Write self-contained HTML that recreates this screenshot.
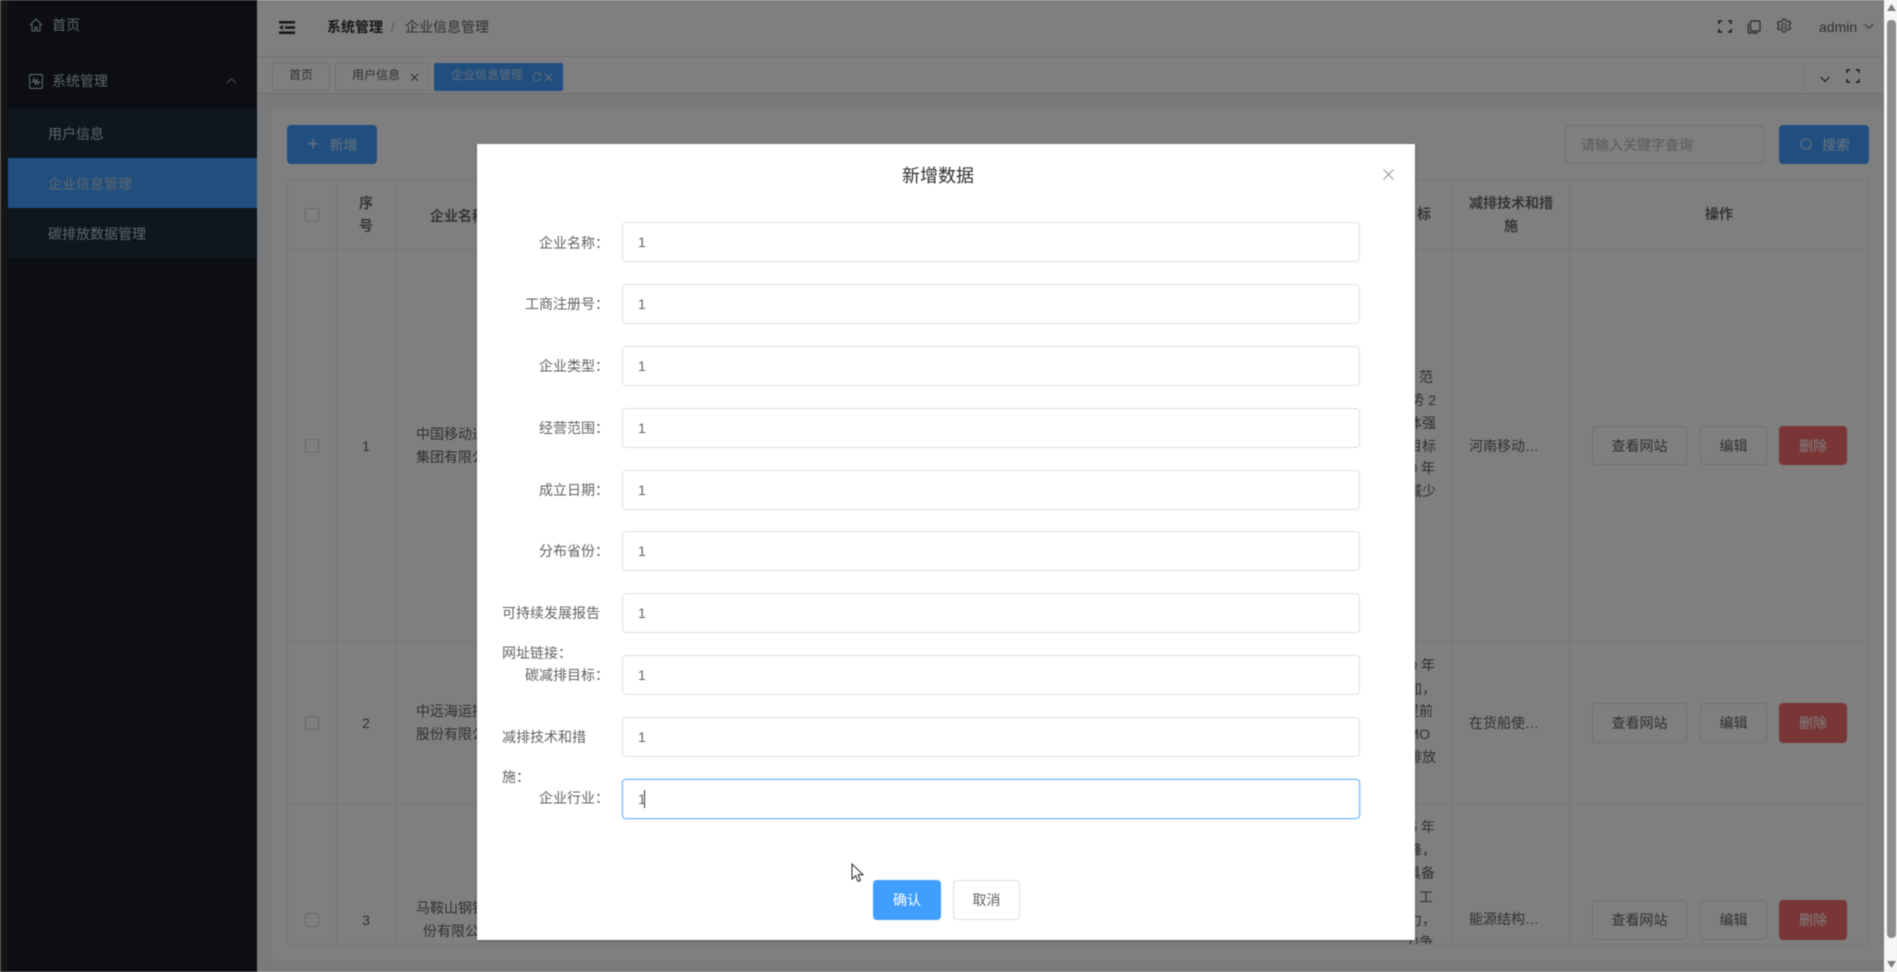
<!DOCTYPE html>
<html lang="zh"><head><meta charset="utf-8"><title>企业信息管理</title>
<style>
*{box-sizing:border-box}
html,body{margin:0;padding:0;width:1897px;height:972px;overflow:hidden;background:#f3f4f6;font-family:"Liberation Sans","Noto Sans CJK SC",sans-serif;font-size:14px;color:#606266}
#w{position:absolute;left:0;top:0;width:1897px;height:972px;overflow:hidden;background:#f3f4f6;filter:blur(.4px)}
.a{position:absolute}
.t{position:absolute;line-height:20px;height:20px;white-space:nowrap}
.c{transform:translateX(-50%)}
.r{transform:translateX(-100%)}
.b{position:absolute;border:1px solid #dcdfe6;border-radius:4px;background:#fff;display:flex;align-items:center;justify-content:center;color:#606266;white-space:nowrap}
.red{background:#f56c6c;border-color:#f56c6c;color:#fff}
.blue{background:#409eff;border-color:#409eff;color:#fff}
.l{position:absolute;background:#ebeef5}
.th{font-weight:700;color:#6a6c70}
.cb{position:absolute;width:14px;height:14px;border:1px solid #c8cbd2;border-radius:2px;background:#fff}
.in{position:absolute;left:622px;width:738px;height:40px;border:1px solid #dfe1e6;border-radius:4px;background:#fff;padding-left:15px;line-height:38px;color:#606266}
.lb{position:absolute;width:200px;left:409px;text-align:right;line-height:20px;height:20px;color:#606266;white-space:nowrap}
.ll{position:absolute;left:502px;line-height:20px;height:20px;color:#606266;white-space:nowrap}
svg{position:absolute;overflow:visible}
</style></head><body><div id="w">

<!-- sidebar -->
<div class="a" style="left:0;top:0;width:8px;height:972px;background:#2a2a2a"></div>
<div class="a" style="left:0;top:0;width:2px;height:972px;background:#4a4038"></div>
<div class="a" style="left:8px;top:0;width:249px;height:972px;background:#181c27"></div>
<div class="a" style="left:8px;top:108px;width:249px;height:150px;background:#1f2d3d"></div>
<div class="a" style="left:8px;top:158px;width:249px;height:50px;background:#409eff"></div>
<svg style="left:29px;top:18px" width="14" height="14" viewBox="0 0 14 14" fill="none" stroke="#bfcbd9" stroke-width="1.1"><path d="M1 7.2 7 1l6 6.200M3 6v7h3V9h2v4h3V6"/></svg>
<div class="t" style="left:52px;top:15px;color:#bfcbd9">首页</div>
<svg style="left:29px;top:74px" width="14" height="15" viewBox="0 0 14 15" fill="none" stroke="#bfcbd9" stroke-width="1.1"><rect x=".6" y=".6" width="12.8" height="13.8" rx="1"/><path d="M2 8h2l1-4 1.500 7L8 5l1 5 1-2h2"/></svg>
<div class="t" style="left:52px;top:71px;color:#bfcbd9">系统管理</div>
<svg style="left:226px;top:77px" width="11" height="7" viewBox="0 0 11 7" fill="none" stroke="#8f99a6" stroke-width="1.1"><path d="M1 6l4.500-4.500L10 6"/></svg>
<div class="t" style="left:48px;top:124px;color:#bfcbd9">用户信息</div>
<div class="t" style="left:48px;top:174px;color:#bfcbd9">企业信息管理</div>
<div class="t" style="left:48px;top:224px;color:#bfcbd9">碳排放数据管理</div>

<!-- header -->
<div class="a" style="left:257px;top:0;width:1627px;height:57px;background:#fff;border-bottom:1px solid #e4e6ea"></div>
<svg style="left:279px;top:21px" width="16" height="13" viewBox="0 0 16 13" fill="#303133"><rect width="16" height="2.6"/><rect x="6" y="5.2" width="10" height="2.6"/><rect y="10.400" width="16" height="2.6"/><path d="M0 6.500l4-2.600v5.200z"/></svg>
<div class="t" style="left:327px;top:17px;font-weight:700;color:#303133">系统管理</div>
<div class="t" style="left:391px;top:17px;color:#b0b3b8">/</div>
<div class="t" style="left:405px;top:17px;color:#606266">企业信息管理</div>
<svg style="left:1718px;top:20px" width="14" height="13" viewBox="0 0 14 13" fill="none" stroke="#303133" stroke-width="1.5"><path d="M1 4V1h3M10 1h3v3M13 9v3h-3M4 12H1V9"/></svg>
<svg style="left:1747px;top:20px" width="14" height="14" viewBox="0 0 14 14" fill="none" stroke="#505258" stroke-width="1.2"><rect x="3.500" y="1" width="9.500" height="10" rx="1"/><path d="M1.200 3.500V12a1 1 0 0 0 1 1H11"/></svg>
<svg style="left:1776px;top:18px" width="16" height="16" viewBox="0 0 16 16" fill="none" stroke="#505258" stroke-width="1.1"><path d="M6.600 1h2.800l.4 2 1.500.8 1.900-.8 1.400 2.400-1.500 1.300v1.600l1.500 1.300-1.400 2.400-1.900-.8-1.500.8-.4 2H6.600l-.4-2-1.500-.8-1.900.8L1.400 10l1.500-1.300V7.100L1.400 5.800l1.400-2.400 1.900.8 1.500-.8z"/><circle cx="8" cy="7.900" r="2.200"/></svg>
<div class="t" style="left:1819px;top:17px;color:#606266">admin</div>
<svg style="left:1864px;top:23px" width="10" height="7" viewBox="0 0 10 7" fill="none" stroke="#606266" stroke-width="1"><path d="M.7 1l4.300 4.300L9.300 1"/></svg>

<!-- tags -->
<div class="a" style="left:257px;top:57px;width:1627px;height:37px;background:#fff;border-bottom:1px solid #dcdee2"></div>
<div class="a" style="left:272px;top:63px;width:58px;height:28px;border:1px solid #dcdfe6;border-radius:2px;background:#fff"></div>
<div class="t" style="left:289px;top:65px;font-size:12px">首页</div>
<div class="a" style="left:335px;top:63px;width:94px;height:28px;border:1px solid #dcdfe6;border-radius:2px;background:#fff"></div>
<div class="t" style="left:352px;top:65px;font-size:12px">用户信息</div>
<svg style="left:410px;top:73px" width="9" height="9" viewBox="0 0 9 9" fill="none" stroke="#606266" stroke-width="1"><path d="M1 1l7 7M8 1L1 8"/></svg>
<div class="a" style="left:434px;top:63px;width:129px;height:28px;border-radius:2px;background:#409eff"></div>
<div class="t" style="left:451px;top:65px;font-size:12px;color:#c6d8ea">企业信息管理</div>
<svg style="left:532px;top:72px" width="10" height="10" viewBox="0 0 10 10" fill="none" stroke="#b8d4ee" stroke-width="1"><path d="M8.600 3A4 4 0 1 0 9 6M9 .8V3.200H6.600"/></svg>
<svg style="left:544px;top:73px" width="9" height="9" viewBox="0 0 9 9" fill="none" stroke="#d6e6f5" stroke-width="1"><path d="M1 1l7 7M8 1L1 8"/></svg>
<div class="a" style="left:1804px;top:66px;width:1px;height:25px;background:#e4e6ea"></div>
<svg style="left:1820px;top:76px" width="10" height="7" viewBox="0 0 10 7" fill="none" stroke="#303133" stroke-width="1.1"><path d="M.7 1l4.300 4.500L9.300 1"/></svg>
<svg style="left:1846px;top:69px" width="14" height="14" viewBox="0 0 14 14" fill="none" stroke="#303133" stroke-width="1.4"><path d="M1 4V1h3M10 1h3v3M13 10v3h-3M4 13H1v-3"/></svg>

<!-- main panel -->
<div class="a" style="left:272px;top:110px;width:1612px;height:850px;background:#fff"></div>
<div class="b blue" style="left:287px;top:125px;width:90px;height:39px"><span style="font-size:19px;font-weight:300;margin-right:10px;line-height:18px;color:#cfe4f8">+</span><span style="color:#d3e6f8;position:relative;left:1px">新增</span></div>
<div class="a" style="left:1565px;top:125px;width:199px;height:39px;border:1px solid #dcdfe6;border-radius:4px;background:#fff;padding-left:15px;line-height:38px;color:#b3b5ba;white-space:nowrap">请输入关键字查询</div>
<div class="b blue" style="left:1779px;top:125px;width:90px;height:39px"><svg style="left:20px;top:12px" width="13" height="13" viewBox="0 0 13 13" fill="none" stroke="#d3e6f8" stroke-width="1.1"><circle cx="6" cy="6" r="5"/><path d="M9.600 9.600l1.600 1.600"/></svg><span style="margin-left:24px;color:#d3e6f8">搜索</span></div>

<!-- table -->
<div class="l" style="left:287px;top:179px;width:1582px;height:1px"></div>
<div class="l" style="left:287px;top:249px;width:1582px;height:1px"></div>
<div class="l" style="left:287px;top:641px;width:1582px;height:1px"></div>
<div class="l" style="left:287px;top:803px;width:1582px;height:1px"></div>
<div class="l" style="left:287px;top:944px;width:1582px;height:1px"></div>
<div class="l" style="left:287px;top:179px;width:1px;height:765px"></div>
<div class="l" style="left:336px;top:179px;width:1px;height:765px"></div>
<div class="l" style="left:396px;top:179px;width:1px;height:765px"></div>
<div class="l" style="left:1452px;top:179px;width:1px;height:765px"></div>
<div class="l" style="left:1569px;top:179px;width:1px;height:765px"></div>
<div class="l" style="left:1868px;top:179px;width:1px;height:765px"></div>

<div class="cb" style="left:305px;top:208px"></div>
<div class="t th c" style="left:366px;top:193px">序</div>
<div class="t th c" style="left:366px;top:216px">号</div>
<div class="t th" style="left:430px;top:206px">企业名称</div>
<div class="t th" style="left:1361px;top:204px">碳减排目标</div>
<div class="t th c" style="left:1511px;top:193px">减排技术和措</div>
<div class="t th c" style="left:1511px;top:216px">施</div>
<div class="t th c" style="left:1719px;top:204px">操作</div>

<!-- row 1 -->
<div class="cb" style="left:305px;top:439px"></div>
<div class="t c" style="left:366px;top:436px">1</div>
<div class="t" style="left:416px;top:424px">中国移动通信</div>
<div class="t" style="left:416px;top:447px">集团有限公司</div>
<div class="t r" style="left:1433px;top:367px">范</div>
<div class="t r" style="left:1436px;top:390px">优势 2</div>
<div class="t r" style="left:1436px;top:413px">整体强</div>
<div class="t r" style="left:1436px;top:436px">的目标</div>
<div class="t r" style="left:1435px;top:458px">30 年</div>
<div class="t r" style="left:1436px;top:481px">并减少</div>
<div class="t" style="left:1469px;top:436px">河南移动…</div>
<div class="b" style="left:1592px;top:426px;width:95px;height:39px">查看网站</div>
<div class="b" style="left:1700px;top:426px;width:67px;height:39px">编辑</div>
<div class="b red" style="left:1779px;top:426px;width:68px;height:39px">删除</div>

<!-- row 2 -->
<div class="cb" style="left:305px;top:716px"></div>
<div class="t c" style="left:366px;top:713px">2</div>
<div class="t" style="left:416px;top:701px">中远海运控股</div>
<div class="t" style="left:416px;top:724px">股份有限公司</div>
<div class="t r" style="left:1435px;top:655px">30 年</div>
<div class="t r" style="left:1436px;top:679px">增加，</div>
<div class="t r" style="left:1433px;top:701px">提前</div>
<div class="t r" style="left:1430px;top:724px">IMO</div>
<div class="t r" style="left:1436px;top:747px">排放</div>
<div class="t" style="left:1469px;top:713px">在货船使…</div>
<div class="b" style="left:1592px;top:703px;width:95px;height:40px">查看网站</div>
<div class="b" style="left:1700px;top:703px;width:67px;height:40px">编辑</div>
<div class="b red" style="left:1779px;top:703px;width:68px;height:40px">删除</div>

<!-- row 3 -->
<div class="cb" style="left:305px;top:913px"></div>
<div class="t c" style="left:366px;top:910px">3</div>
<div class="t" style="left:416px;top:898px">马鞍山钢铁股</div>
<div class="t" style="left:423px;top:921px">份有限公司</div>
<div class="t r" style="left:1435px;top:817px">25 年</div>
<div class="t r" style="left:1436px;top:840px">达峰，</div>
<div class="t r" style="left:1435px;top:863px">具备</div>
<div class="t r" style="left:1433px;top:887px">、工</div>
<div class="t r" style="left:1436px;top:910px">努力，</div>
<div class="a" style="left:1380px;top:931px;width:60px;height:13px;overflow:hidden"><div class="t" style="right:7px;top:1px">力争</div></div>
<div class="t" style="left:1469px;top:909px">能源结构…</div>
<div class="b" style="left:1592px;top:900px;width:95px;height:40px">查看网站</div>
<div class="b" style="left:1700px;top:900px;width:67px;height:40px">编辑</div>
<div class="b red" style="left:1779px;top:900px;width:68px;height:40px">删除</div>

<!-- overlay -->
<div class="a" style="left:0;top:0;width:1884px;height:972px;background:rgba(0,0,0,.5)"></div>

<!-- modal -->
<div class="a" style="left:477px;top:144px;width:938px;height:796px;background:#fff;box-shadow:0 1px 3px rgba(0,0,0,.3)"></div>
<div class="t c" style="left:938px;top:166px;font-size:18px;color:#303133">新增数据</div>
<svg style="left:1383px;top:169px" width="11" height="11" viewBox="0 0 11 11" fill="none" stroke="#909399" stroke-width="1"><path d="M.5.5l10 10M10.500.5l-10 10"/></svg>

<div class="lb" style="top:233px">企业名称：</div><div class="in" style="top:222px">1</div>
<div class="lb" style="top:294px">工商注册号：</div><div class="in" style="top:284px">1</div>
<div class="lb" style="top:356px">企业类型：</div><div class="in" style="top:346px">1</div>
<div class="lb" style="top:418px">经营范围：</div><div class="in" style="top:408px">1</div>
<div class="lb" style="top:480px">成立日期：</div><div class="in" style="top:470px">1</div>
<div class="lb" style="top:541px">分布省份：</div><div class="in" style="top:531px">1</div>
<div class="ll" style="top:603px">可持续发展报告</div><div class="in" style="top:593px">1</div>
<div class="ll" style="top:643px">网址链接：</div>
<div class="lb" style="top:665px">碳减排目标：</div><div class="in" style="top:655px">1</div>
<div class="ll" style="top:727px">减排技术和措</div><div class="in" style="top:717px">1</div>
<div class="ll" style="top:767px">施：</div>
<div class="lb" style="top:788px">企业行业：</div><div class="in" style="top:779px;border-color:#79bbff;box-shadow:0 0 0 .5px #a6d0fa">1</div>
<div class="a" style="left:644px;top:790px;width:1px;height:18px;background:#303133"></div>

<div class="b blue" style="left:873px;top:880px;width:68px;height:40px;color:#fff">确认</div>
<div class="b" style="left:953px;top:880px;width:67px;height:40px">取消</div>

<!-- cursor -->
<svg style="left:851px;top:863px" width="14" height="20" viewBox="0 0 14 20"><path d="M1 1v15l3.600-3.300 2.400 5.600 2.500-1.100-2.400-5.500h4.900z" fill="#fff" stroke="#222" stroke-width="1"/></svg>

<!-- scrollbar -->
<div class="a" style="left:1884px;top:0;width:13px;height:972px;background:#f6f6f6"></div>
<div class="a" style="left:1887px;top:20px;width:9px;height:918px;background:#8e8e8e;border-radius:4px"></div>
<svg style="left:1887px;top:4px" width="9" height="8" viewBox="0 0 9 8" fill="#7d7d7d"><path d="M4.500 0L9 7H0z"/></svg>
<svg style="left:1887px;top:960px" width="9" height="8" viewBox="0 0 9 8" fill="#7d7d7d"><path d="M0 1h9L4.500 8z"/></svg>
</div></body></html>
